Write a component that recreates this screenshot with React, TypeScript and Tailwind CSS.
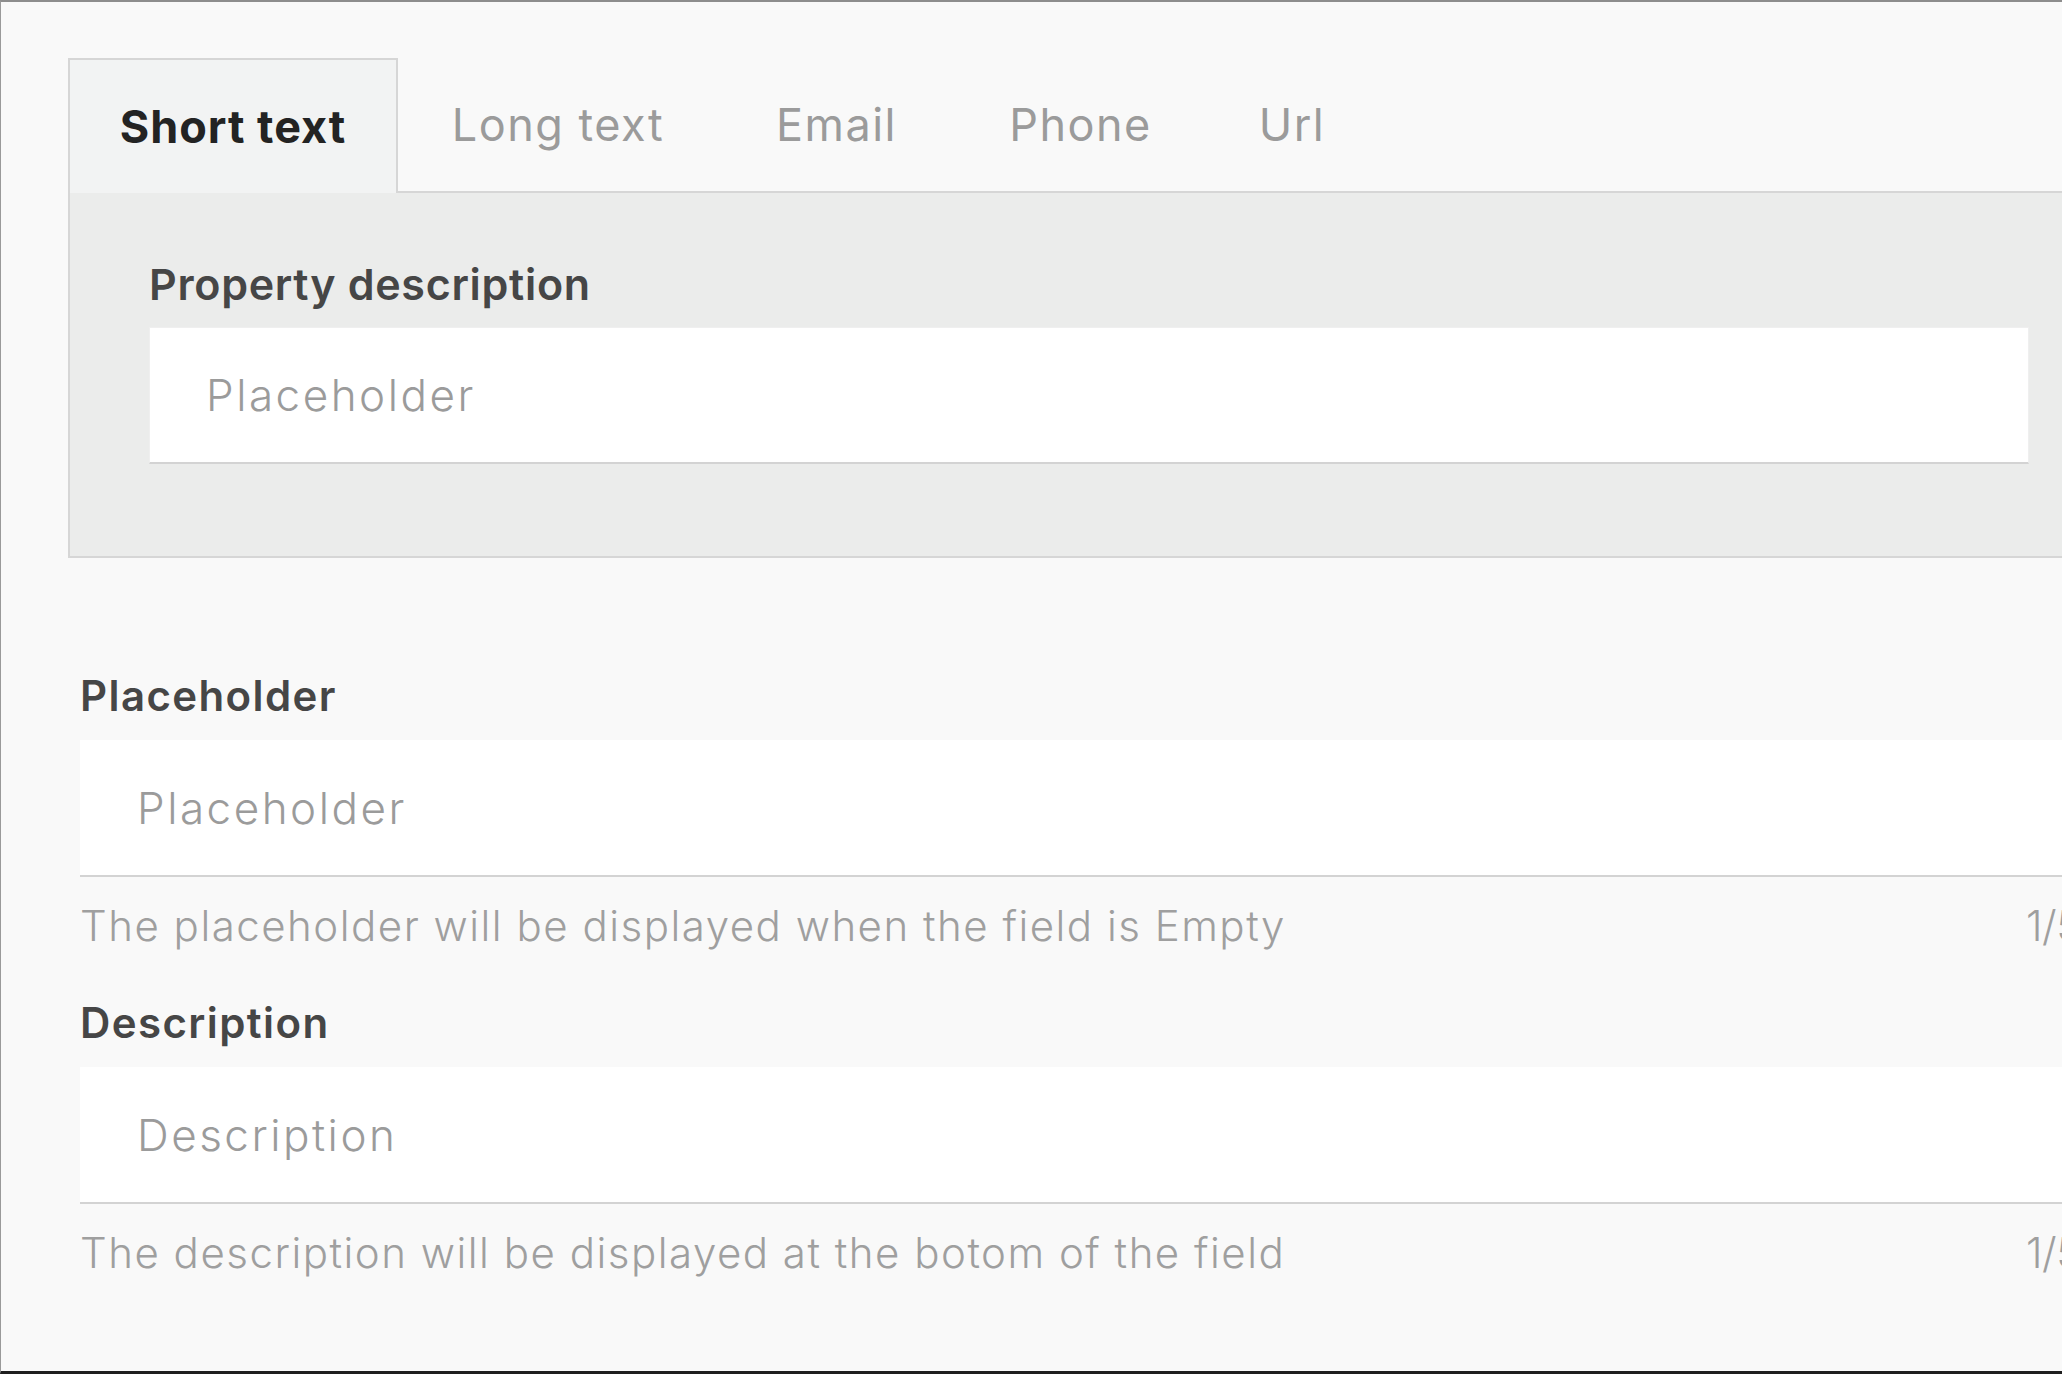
import React from 'react';

const tabs = [
  { label: 'Short text', w: 'w-[330px]', active: true },
  { label: 'Long text', w: 'w-[320px]' },
  { label: 'Email', w: 'w-[237px]' },
  { label: 'Phone', w: 'w-[251px]' },
  { label: 'Url', w: 'w-[172px]' },
];

type FieldProps = {
  label: string;
  placeholder: string;
  hint: string;
  counter: string;
  first?: boolean;
};

const Field: React.FC<FieldProps> = ({ label, placeholder, hint, counter, first }) => {
  return (
    <div className={first ? '' : 'mt-[49px]'}>
      <label className="block text-[42px] leading-[48px] font-semibold tracking-[1.4px] text-[#464646]">{label}</label>
      <input
        readOnly
        placeholder={placeholder}
        className="mt-[20px] block w-full h-[137px] bg-white border-b-2 border-[#d3d3d3] pl-[57px] text-[44px] font-light tracking-[2.5px] outline-none placeholder:text-[#9b9b9b]"
      />
      <div className="mt-[25px] flex items-center justify-between text-[42px] leading-[48px] font-light text-[#9f9f9f]">
        <span className="tracking-[1.5px]">{hint}</span>
        <span className="tracking-[-0.5px]">{counter}</span>
      </div>
    </div>
  );
};

export default function App() {
  return (
    <div className="h-screen w-full overflow-hidden bg-[#f9f9f9] border-t-2 border-l border-b-[3px] border-t-[#8d8d8d] border-l-[#9a9a9a] border-b-[#1e1e1e] font-['Inter',sans-serif]">
      <div className="w-[2042px] ml-[67px] pt-[56px]">
        {/* tab strip */}
        <div className="flex h-[135px]">
          {tabs.map((t) =>
            t.active ? (
              <div
                key={t.label}
                className={`${t.w} flex items-center justify-center bg-[#f2f3f3] border-2 border-b-0 border-[#d6d6d6] text-[45px] font-bold tracking-[1px] text-[#232323]`}
              >
                {t.label}
              </div>
            ) : (
              <div
                key={t.label}
                className={`${t.w} flex items-center justify-center border-b-2 border-[#d6d6d6] text-[45px] tracking-[1.5px] text-[#9b9b9b]`}
              >
                {t.label}
              </div>
            )
          )}
          <div className="flex-1 border-b-2 border-[#d6d6d6]" />
        </div>

        {/* active tab body */}
        <div className="bg-[#ebeceb] border-2 border-t-0 border-[#d6d6d6] px-[79px] pt-[67px] pb-[92px]">
          <label className="block text-[43px] leading-[48px] font-semibold tracking-[0.7px] text-[#464646]">Property description</label>
          <input
            readOnly
            placeholder="Placeholder"
            className="mt-[19px] block w-full h-[137px] bg-white border border-[#efefef] border-b-2 border-b-[#d3d3d3] pl-[56px] text-[44px] font-light tracking-[2.5px] outline-none placeholder:text-[#9b9b9b]"
          />
        </div>

        {/* field settings */}
        <div className="pl-[12px] pr-[4px] pt-[114px]">
          <Field
            first
            label="Placeholder"
            placeholder="Placeholder"
            hint="The placeholder will be displayed when the field is Empty"
            counter="1/50"
          />
          <Field
            label="Description"
            placeholder="Description"
            hint="The description will be displayed at the botom of the field"
            counter="1/50"
          />
        </div>
      </div>
    </div>
  );
}
